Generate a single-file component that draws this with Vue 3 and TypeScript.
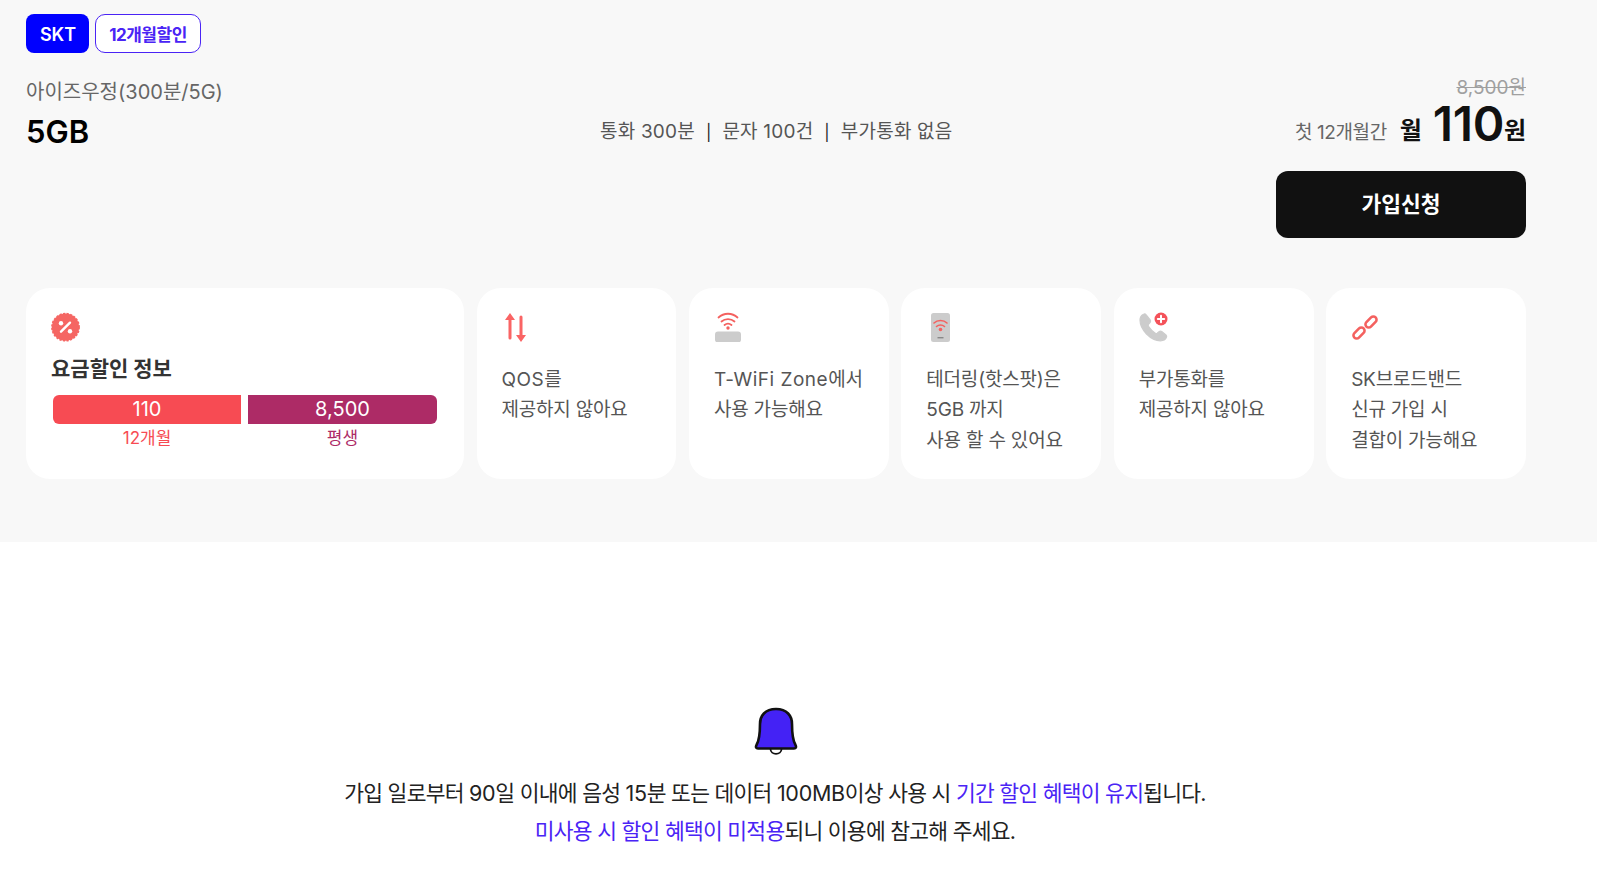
<script setup lang="ts">
const specs: string[] = ['통화 300분', '문자 100건', '부가통화 없음']
</script>

<template>
  <div class="page">
    <section class="plan">
      <div class="chips">
        <span class="chip carrier">SKT</span>
        <span class="chip promo">12개월할인</span>
      </div>

      <div class="summary">
        <div class="name">
          <p class="plan-name">아이즈우정(300분/5G)</p>
          <p class="data">5GB</p>
        </div>
        <div class="specs">
          <template v-for="(s, i) in specs" :key="s">
            <span v-if="i > 0" class="sep">|</span>
            <span>{{ s }}</span>
          </template>
        </div>
        <div class="price">
          <p class="origin">8,500원</p>
          <p class="now">
            <span class="period">첫 12개월간</span>
            <span class="month">월</span>
            <span class="amount">110</span>
            <span class="won">원</span>
          </p>
          <button type="button" class="apply">가입신청</button>
        </div>
      </div>

      <div class="cards">
        <div class="card wide">
          <svg class="icon" viewBox="0 0 30 30">
            <circle cx="14.500" cy="15.200" r="13.600" fill="#f56663" stroke="#f56663" stroke-width="1.600" stroke-dasharray="2.200 1.400" />
            <path stroke="#fff" stroke-width="2.400" stroke-linecap="round" d="M19 10.700l-9 9" />
            <circle cx="10" cy="11.200" r="2.200" fill="#fff" />
            <circle cx="19" cy="19.200" r="2.200" fill="#fff" />
          </svg>
          <h3 class="discount-title">요금할인 정보</h3>
          <div class="bars">
            <div class="bar-col first">
              <div class="bar">110</div>
              <span class="bar-label">12개월</span>
            </div>
            <div class="bar-col second">
              <div class="bar">8,500</div>
              <span class="bar-label">평생</span>
            </div>
          </div>
        </div>

        <div class="card">
          <svg class="icon" viewBox="0 0 30 30">
            <path fill="#fa6464" d="M8 1l5 7H9.500v18a1.500 1.500 0 0 1-3 0V8H3z" />
            <path fill="#fa6464" d="M19 30l5-7h-3.500V5a1.500 1.500 0 0 0-3 0v18H14z" />
          </svg>
          <p><span class="latin">QOS</span>를<br />제공하지 않아요</p>
        </div>

        <div class="card">
          <svg class="icon" viewBox="0 0 30 30">
            <g fill="none" stroke="#f4615f" stroke-width="1.800" stroke-linecap="round">
              <path d="M4.500 5.500c5.300-5 13.700-5 19 0" />
              <path d="M7.500 9.500c3.600-3.200 9.400-3.200 13 0" />
              <path d="M10.500 13c2-1.600 5-1.600 7 0" />
            </g>
            <circle cx="14" cy="16" r="1.700" fill="#f4615f" />
            <rect x="1" y="19.500" width="26" height="11" rx="3" fill="#cccccc" />
          </svg>
          <p><span class="latin">T-WiFi Zone</span>에서<br />사용 가능해요</p>
        </div>

        <div class="card">
          <svg class="icon" viewBox="0 0 30 30">
            <rect x="5" y="1" width="19" height="29" rx="2.500" fill="#cccccc" />
            <g fill="none" stroke="#f4615f" stroke-width="1.600" stroke-linecap="round">
              <path d="M8 11c3.500-3.300 9.500-3.300 13 0" />
              <path d="M10.500 14.500c2.200-2 5.800-2 8 0" />
            </g>
            <circle cx="14.500" cy="17.500" r="1.800" fill="#f4615f" />
            <rect x="11.500" y="25" width="6" height="1.400" fill="#888888" />
          </svg>
          <p>테더링(핫스팟)은<br />5GB 까지<br />사용 할 수 있어요</p>
        </div>

        <div class="card">
          <svg class="icon" viewBox="0 0 30 30">
            <path fill="#cccccc" stroke="#cccccc" stroke-width="1.200" stroke-linejoin="round" d="M4.500 2.200C2.200 3.200 1 5.500 1 8c0 4.500 2.300 9.500 6.500 14 4.300 4.300 9.500 6.800 14 6.800 2.700 0 5-1.200 6-3.500.4-1 .2-1.800-.5-2.400l-4.300-3.300c-.8-.6-1.600-.6-2.400 0l-2.200 1.700c-.6.400-1.200.4-1.800 0-2.700-1.800-5-4.300-6.800-7-.4-.6-.4-1.200 0-1.800l1.700-2.200c.6-.8.600-1.600 0-2.400L7 2.700c-.6-.8-1.500-1-2.500-.5z" />
            <circle cx="22" cy="7" r="6.500" fill="#f4525a" />
            <path stroke="#fff" stroke-width="2" stroke-linecap="round" d="M22 3.800v6.400M18.800 7h6.400" />
          </svg>
          <p>부가통화를<br />제공하지 않아요</p>
        </div>

        <div class="card">
          <svg class="icon" viewBox="0 0 30 30">
            <g fill="none" stroke="#f4615f" stroke-width="2.600">
              <rect x="-6.500" y="-3.200" width="13" height="6.400" rx="3.200" transform="translate(8 21) rotate(-45)" />
              <rect x="-6.500" y="-3.200" width="13" height="6.400" rx="3.200" transform="translate(20 10) rotate(-45)" />
            </g>
          </svg>
          <p>SK브로드밴드<br />신규 가입 시<br />결합이 가능해요</p>
        </div>
      </div>
    </section>

    <section class="notice">
      <svg class="bell" viewBox="0 0 44 50">
        <path fill="#4422f5" stroke="#111" stroke-width="2.600" stroke-linejoin="round" d="M22 2C11 2 6 9 6 17c0 9-.5 16-3.500 21-1 2-.5 3.500 1.500 3.500h36c2 0 2.500-1.500 1.500-3.500-3-5-3.500-12-3.500-21C38 9 33 2 22 2z" />
        <path fill="none" stroke="#111" stroke-width="1.800" d="M16.500 42c0 6.500 11 6.500 11 0" />
      </svg>
      <p>가입 일로부터 <span class="num">90</span>일 이내에 음성 <span class="num">15</span>분 또는 데이터 <span class="num">100MB</span>이상 사용 시 <em>기간 할인 혜택이 유지</em>됩니다.</p>
      <p><em>미사용 시 할인 혜택이 미적용</em>되니 이용에 참고해 주세요.</p>
    </section>
  </div>
</template>

<style scoped>
.page {
  font-family: "Inter", "Noto Sans CJK KR", sans-serif;
  width: 1597px;
  height: 880px;
  overflow: hidden;
  background: #fff;
}
p { margin: 0; }

.plan {
  background: #f8f8f8;
  height: 542px;
  padding: 14px 71px 0 26px;
  box-sizing: border-box;
}

.chips {
  display: flex;
  gap: 6px;
}
.chip {
  height: 39px;
  box-sizing: border-box;
  display: flex;
  align-items: center;
  justify-content: center;
  border-radius: 8px;
  font-size: 18px;
  font-weight: 600;
}
.carrier {
  width: 63px;
  padding: 1px 0 0 1px;
  background: #0000ff;
  color: #fff;
}
.promo {
  width: 106px;
  background: #fff;
  border: 1px solid #4a24f5;
  border-radius: 10px;
  color: #4a24f5;
  font-size: 17px;
  font-weight: 700;
  letter-spacing: -0.5px;
}

.summary {
  display: flex;
  justify-content: space-between;
  position: relative;
  height: 198px;
  margin-top: 25px;
}
.plan-name {
  font-size: 20px;
  color: #666;
  line-height: 28px;
}
.data {
  font-size: 31px;
  font-weight: 600;
  color: #000;
  line-height: 42px;
  margin-top: 5px;
}
.specs {
  position: absolute;
  left: 574px;
  top: 40px;
  display: flex;
  gap: 11px;
  font-size: 19px;
  letter-spacing: 0.2px;
  line-height: 28px;
  color: #555;
}
.sep { color: #222; font-size: 16px; }

.price {
  display: flex;
  flex-direction: column;
  align-items: flex-end;
  margin-top: -3px;
}
.origin {
  font-size: 19px;
  line-height: 26px;
  color: #a0a0a0;
  text-decoration: line-through;
}
.now {
  display: flex;
  align-items: baseline;
  color: #111;
  line-height: 48px;
  margin-top: -1px;
}
.period { font-size: 19px; color: #666; letter-spacing: -0.4px; margin-right: 13px; transform: translateY(-2px); }
.month { font-size: 24px; font-weight: 700; margin-right: 11px; transform: translateY(-2px); }
.amount { font-size: 48px; font-weight: 600; letter-spacing: -0.4px; }
.won { font-size: 24px; font-weight: 700; transform: translateY(-2px); }
.apply {
  width: 250px;
  height: 67px;
  margin-top: 12px;
  padding: 0 0 4px;
  border: 0;
  border-radius: 12px;
  background: #111;
  color: #fff;
  font-family: inherit;
  font-size: 21.500px;
  font-weight: 700;
}

.cards {
  display: flex;
  gap: 12.5px;
  margin-top: 12px;
}
.card {
  width: 200px;
  height: 191px;
  box-sizing: border-box;
  background: #fff;
  border-radius: 24px;
  padding: 24px 25px 0;
  color: #555;
  font-size: 19px;
  line-height: 30.5px;
}
.card.wide {
  width: 438px;
}
.card p {
  margin-top: 22.500px;
  letter-spacing: -0.2px;
  white-space: nowrap;
}
.latin {
  letter-spacing: 0.5px;
}
.icon {
  display: block;
  width: 30px;
  height: 30px;
}
.discount-title {
  margin: 11px 0 0;
  font-size: 21px;
  line-height: 32px;
  font-weight: 700;
  color: #333;
}
.bars {
  display: flex;
  gap: 7px;
  margin: 10px 2px 0;
}
.bar-col {
  display: flex;
  flex-direction: column;
  align-items: center;
}
.first { width: 188px; color: #f74b53; }
.second { width: 189px; color: #ad2b66; }
.bar {
  width: 100%;
  height: 29px;
  line-height: 29px;
  text-align: center;
  color: #fff;
  font-size: 20px;
}
.first .bar { background: #f74b53; border-radius: 6px 0 0 6px; }
.second .bar { background: #ad2b66; border-radius: 0 6px 6px 0; }
.bar-label {
  font-size: 17px;
  line-height: 22px;
  margin-top: 3px;
}

.notice {
  padding: 165px 47px 0 0;
  text-align: center;
  font-size: 21.500px;
  letter-spacing: -0.74px;
  line-height: 38px;
  color: #222;
}
.notice em {
  font-style: normal;
  color: #4a24f5;
}
.num {
  letter-spacing: -0.3px;
}
.bell {
  display: block;
  width: 44px;
  height: 50px;
  padding-left: 2px;
  margin: 0 auto 17px;
}
</style>
